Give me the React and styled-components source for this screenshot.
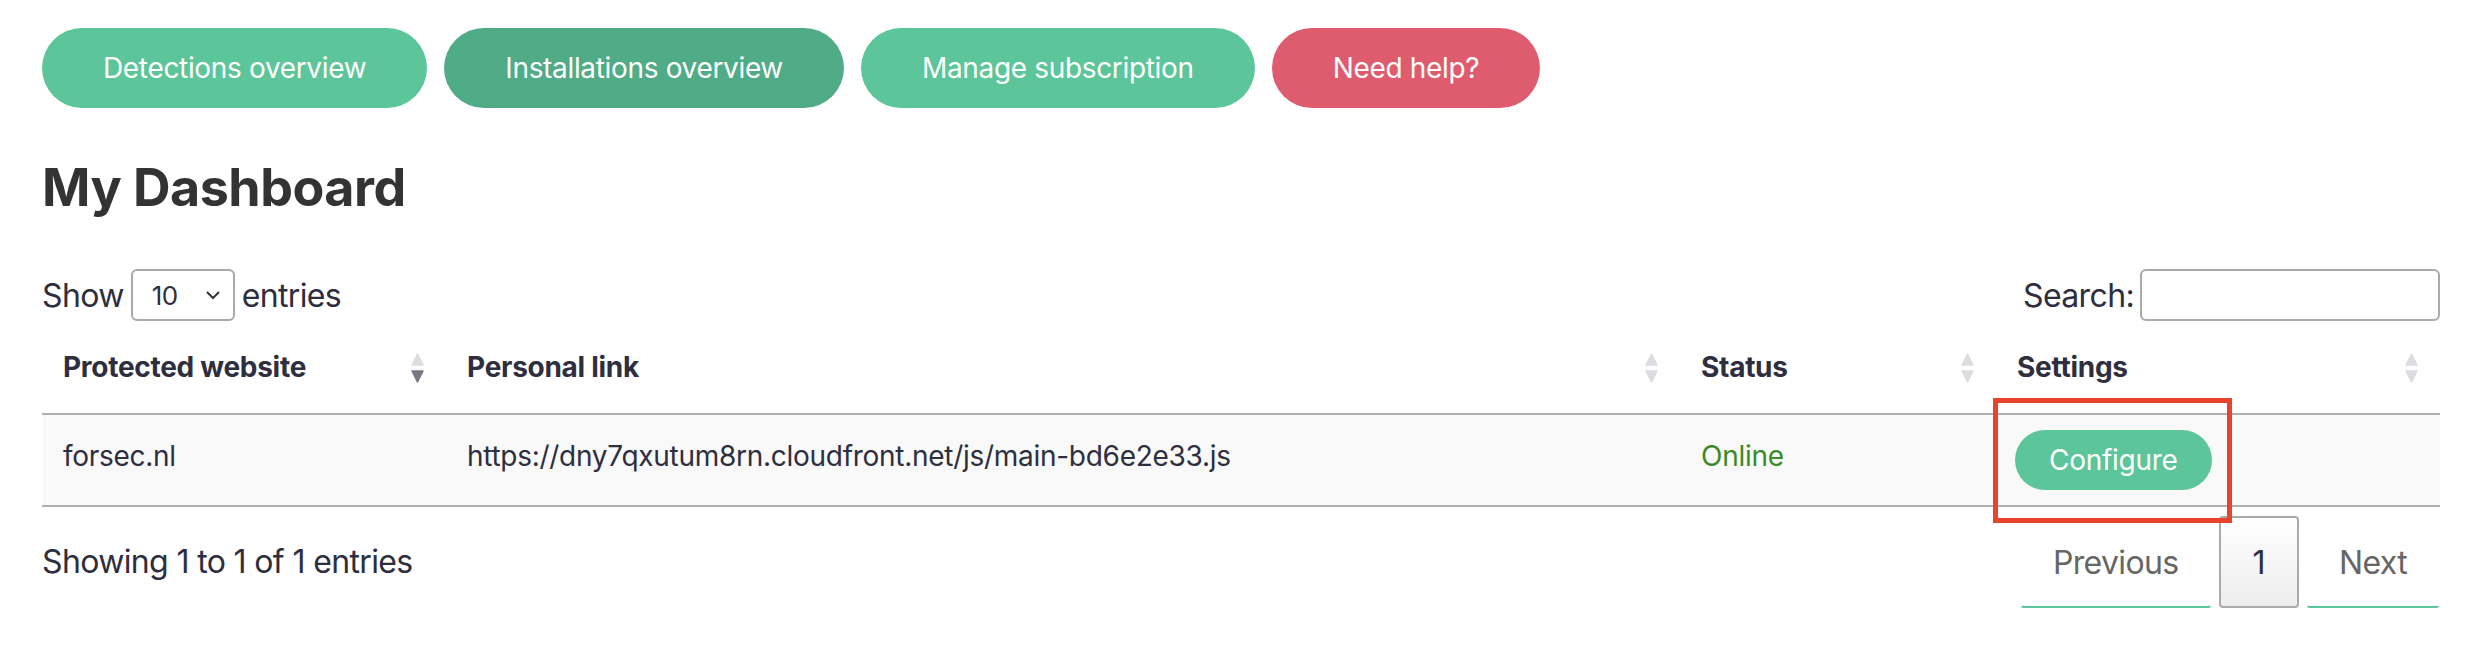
import React from 'react';
import styled, { createGlobalStyle } from 'styled-components';

const GlobalStyle = createGlobalStyle`
   body {
      margin: 0;
      background: #fff;
      font-family: Inter, "Noto Sans", sans-serif;
      color: #2e2e3f;
   }
`;

const Page = styled.div`
   padding: 28px 30px 40px 42px;
`;
const Nav = styled.nav`
   display: flex;
   gap: 17px;
`;
const NavButton = styled.a`
   display: inline-flex;
   align-items: center;
   height: 80px;
   padding: 0 61px;
   border-radius: 40px;
   background: ${(p) => p.bg};
   color: #fff;
   font-size: 28px;
   letter-spacing: -0.012em;
   cursor: pointer;
`;
const Title = styled.h1`
   margin: 47px 0 0;
   font-size: 52px;
   line-height: 66px;
   font-weight: 700;
   letter-spacing: -0.01em;
   color: #333;
`;
const Controls = styled.div`
   display: flex;
   justify-content: space-between;
   align-items: center;
   margin-top: 48px;
   height: 52px;
   font-size: 32px;
   letter-spacing: -0.02em;
`;
const Label = styled.label`
   display: flex;
   align-items: center;
   gap: ${(p) => p.$gap || '7px'};
`;
const Select = styled.div`
   display: flex;
   align-items: center;
   justify-content: space-between;
   box-sizing: border-box;
   width: 104px;
   height: 52px;
   padding: 0 12px 0 19px;
   border: 2px solid #aaa;
   border-radius: 6px;
   font-size: 26px;
   color: #2e2e3f;
`;
const SearchInput = styled.input`
   box-sizing: border-box;
   width: 300px;
   height: 52px;
   border: 2px solid #aaa;
   border-radius: 6px;
   font-size: 26px;
   outline: none;
`;
const Table = styled.table`
   width: 100%;
   table-layout: fixed;
   border-collapse: collapse;
`;
const Th = styled.th`
   height: 92px;
   padding: 0 22px 0 21px;
   text-align: left;
   font-size: 28px;
   font-weight: 700;
   letter-spacing: -0.01em;
   border-bottom: 2px solid #b0b0b0;
`;
const HeadInner = styled.div`
   display: flex;
   align-items: center;
   justify-content: space-between;
`;
const SortIcon = styled.span`
   display: flex;
   flex-direction: column;
   gap: 4px;
   margin-top: 2px;
`;
const Row = styled.tr`
   background: #f9f9f9;
   height: 92px;
`;
const Td = styled.td`
   padding: ${(p) => (p.$flat ? '0 20px 0 19px' : '0 20px 8px 21px')};
   font-size: 28px;
   letter-spacing: -0.01em;
   vertical-align: middle;
   border-bottom: 2px solid #b0b0b0;
   color: ${(p) => p.$color || '#2e2e3f'};
   position: relative;
`;
const ConfigureButton = styled.a`
   display: inline-flex;
   align-items: center;
   height: 60px;
   padding: 0 34px;
   border-radius: 30px;
   background: #5cc59a;
   color: #fff;
   font-size: 28px;
   letter-spacing: -0.01em;
`;
const Highlight = styled.span`
   position: absolute;
   left: -3px;
   top: -17px;
   width: 239px;
   height: 125px;
   box-sizing: border-box;
   border: 5px solid #e8432b;
   pointer-events: none;
`;
const Footer = styled.div`
   display: flex;
   justify-content: space-between;
   align-items: flex-start;
   font-size: 32px;
   letter-spacing: -0.02em;
`;
const Info = styled.div`
   padding-top: 32px;
   line-height: 45px;
`;
const Pagination = styled.div`
   display: flex;
   gap: 7px;
   margin-top: 9px;
`;
const PageButton = styled.a`
   display: flex;
   align-items: center;
   box-sizing: border-box;
   height: 92px;
   padding: 0 ${(p) => (p.$current ? '32px' : '31px')};
   border-radius: 4px;
   color: ${(p) => (p.$current ? '#2e2e3f' : '#666')};
   border: 2px solid ${(p) => (p.$current ? '#aaa' : 'transparent')};
   border-bottom: 2px solid ${(p) => (p.$current ? '#aaa' : '#5cc59a')};
   background: ${(p) => (p.$current ? 'linear-gradient(#fff, #ededed)' : 'transparent')};
`;

function Sort({ active }) {
   return (
      <SortIcon>
         <svg width="13" height="13" viewBox="0 0 13 13">
            <polygon points="6.5,1 12,12 1,12" fill="#dcdce1" stroke="#dcdce1" strokeWidth="1.5" strokeLinejoin="round" />
         </svg>
         <svg width="13" height="13" viewBox="0 0 13 13">
            <polygon points="1,1 12,1 6.5,12" fill={active ? '#777786' : '#dcdce1'} stroke={active ? '#777786' : '#dcdce1'} strokeWidth="1.5" strokeLinejoin="round" />
         </svg>
      </SortIcon>
   );
}

function Chevron() {
   return (
      <svg width="16" height="10" viewBox="0 0 16 10">
         <polyline points="2,2 8,8 14,2" fill="none" stroke="#333" strokeWidth="2" />
      </svg>
   );
}

const columns = [
   { title: 'Protected website', width: 404, active: true },
   { title: 'Personal link', width: 1234 },
   { title: 'Status', width: 316 },
   { title: 'Settings', width: 444 },
];

function App() {
   return (
      <Page>
         <GlobalStyle />
         <Nav>
            <NavButton bg="#5cc59a">Detections overview</NavButton>
            <NavButton bg="#50ab87">Installations overview</NavButton>
            <NavButton bg="#5cc59a">Manage subscription</NavButton>
            <NavButton bg="#df5c6f">Need help?</NavButton>
         </Nav>
         <Title>My Dashboard</Title>
         <Controls>
            <Label>
               Show
               <Select>
                  10
                  <Chevron />
               </Select>
               entries
            </Label>
            <Label $gap="6px">
               Search:
               <SearchInput type="search" />
            </Label>
         </Controls>
         <Table>
            <colgroup>
               {columns.map((c) => (
                  <col key={c.title} style={{ width: c.width }} />
               ))}
            </colgroup>
            <thead>
               <tr>
                  {columns.map((c) => (
                     <Th key={c.title}>
                        <HeadInner>
                           {c.title}
                           <Sort active={c.active} />
                        </HeadInner>
                     </Th>
                  ))}
               </tr>
            </thead>
            <tbody>
               <Row>
                  <Td>forsec.nl</Td>
                  <Td>https://dny7qxutum8rn.cloudfront.net/js/main-bd6e2e33.js</Td>
                  <Td $color="#3b8a26">Online</Td>
                  <Td $flat>
                     <ConfigureButton>Configure</ConfigureButton>
                     <Highlight />
                  </Td>
               </Row>
            </tbody>
         </Table>
         <Footer>
            <Info>Showing 1 to 1 of 1 entries</Info>
            <Pagination>
               <PageButton>Previous</PageButton>
               <PageButton $current>1</PageButton>
               <PageButton>Next</PageButton>
            </Pagination>
         </Footer>
      </Page>
   );
}

export default App;
